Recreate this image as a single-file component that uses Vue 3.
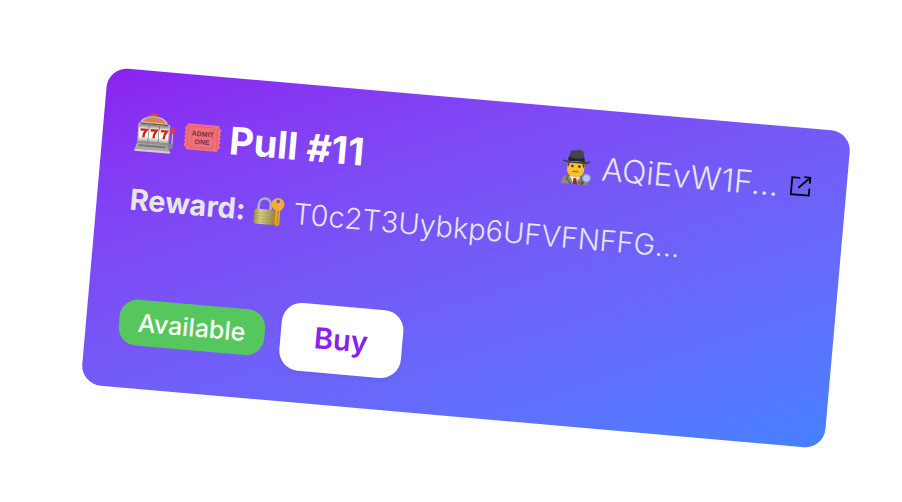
<script setup>
const pull = {
  number: 11,
  owner: 'AQiEvW1F...',
  reward: 'T0c2T3Uybkp6UFVFNFFG...',
  status: 'Available',
}
</script>

<template>
  <main class="stage">
    <article class="card">
      <header class="card-header">
        <h2 class="title">
          <svg class="emoji-large" viewBox="0 0 40 40" aria-hidden="true">
            <defs>
              <linearGradient id="steel" x1="0" y1="0" x2="0" y2="1">
                <stop offset="0" stop-color="#d8d6cf" />
                <stop offset="1" stop-color="#8b8a88" />
              </linearGradient>
              <linearGradient id="reel" x1="0" y1="0" x2="0" y2="1">
                <stop offset="0" stop-color="#8d897c" />
                <stop offset="0.3" stop-color="#fffef8" />
                <stop offset="0.7" stop-color="#fffdf5" />
                <stop offset="1" stop-color="#aaa599" />
              </linearGradient>
              <linearGradient id="dome" x1="0" y1="0" x2="0" y2="1">
                <stop offset="0" stop-color="#c98f62" />
                <stop offset="1" stop-color="#e9793a" />
              </linearGradient>
            </defs>
            <rect x="14" y="0" width="7" height="4" rx="1.5" fill="#c8502f" />
            <path d="M3 13C3 6 10 3 17.500 3S32 6 32 13z" fill="#c4bdb0" />
            <path d="M6 9c3-4 7-5 11.500-5S26 5 29 9z" fill="url(#dome)" />
            <rect x="2" y="10" width="32" height="22" rx="3" fill="url(#steel)" />
            <path d="M4 11h28" stroke="#73654e" stroke-width="1.500" />
            <rect x="3" y="12" width="30" height="17" rx="1" fill="#6b6253" />
            <rect x="3" y="12" width="9.600" height="17" fill="url(#reel)" />
            <rect x="13.200" y="12" width="9.600" height="17" fill="url(#reel)" />
            <rect x="23.400" y="12" width="9.600" height="17" fill="url(#reel)" />
            <g fill="none" stroke="#d81e1e" stroke-width="2.400">
              <path d="M4.500 17.200h6c-2 2.500-2.500 4.500-2.500 7.800" />
              <path d="M14.700 17.200h6c-2 2.500-2.500 4.500-2.500 7.800" />
              <path d="M24.900 17.200h6c-2 2.500-2.500 4.500-2.500 7.800" />
            </g>
            <path d="M2 31h31l3 7H0z" fill="#a9a7a8" />
            <path d="M4 32h27v2H4z" fill="#77777b" />
            <path d="M0 37h36v2H0z" fill="#d0cfd3" />
            <path d="M34 31h3V19" fill="none" stroke="#b3b0bd" stroke-width="1.500" />
            <circle cx="37" cy="16" r="2.700" fill="#e23a45" />
            <rect x="33" y="29" width="5" height="5" rx="1" fill="#888894" />
          </svg>
          <svg class="emoji-ticket" viewBox="0 0 38 28" aria-hidden="true">
            <path d="M3 1h32a2 2 0 0 0 2 3v3a1 1 0 0 0 0 2v2a1 1 0 0 0 0 2v2a1 1 0 0 0 0 2v2a1 1 0 0 0 0 2v3a2 2 0 0 0-2 3H3a2 2 0 0 0-2-3v-3a1 1 0 0 0 0-2v-2a1 1 0 0 0 0-2v-2a1 1 0 0 0 0-2V9a1 1 0 0 0 0-2V4a2 2 0 0 0 2-3z" fill="#f0707b" />
            <rect x="8" y="3.500" width="22" height="21" fill="none" stroke="#e06470" />
            <path d="M4.500 4v20M33.500 4v20" stroke="#c9535f" stroke-dasharray="1 1" />
            <text class="ticket-text" x="19" y="13" text-anchor="middle">ADMIT</text>
            <text class="ticket-text" x="19" y="21" text-anchor="middle">ONE</text>
          </svg>
          <span>Pull #{{ pull.number }}</span>
        </h2>

        <div class="owner">
          <svg class="emoji-person" viewBox="0 0 32 36" aria-hidden="true">
            <path d="M1 35c0-6 3-9 8-9h10c5 0 8 3 8 9z" fill="#91877a" />
            <path d="M9 27l5 8 6-8z" fill="#f5f4f5" />
            <path d="M13 29h3l1 6h-4z" fill="#9e2438" />
            <path d="M8 26l-2 4 5 5M20 26l2 4-4 5" fill="none" stroke="#5f564e" />
            <path d="M6 12h17v9c0 4-4 7-8.500 7S6 25 6 21z" fill="#fbc02d" />
            <path d="M6 12h2v4l-1 2-1-1zM21 12h2v5l-1 1-1-2z" fill="#6d4930" />
            <circle cx="11" cy="17" r="1.300" fill="#492e1b" />
            <circle cx="18" cy="17" r="1.300" fill="#492e1b" />
            <path d="M11.500 22.500h6" stroke="#a06a1c" stroke-width="1.300" />
            <path d="M6 11L8 3c1-3 4-1 6.500-2C17 0 20 0 21 3l2 8z" fill="#45454a" />
            <path d="M7 8c5 2 11 2 15 0l1 4H6z" fill="#242429" />
            <path d="M0 11c5 2 24 2 29 0-2 4-6 3-14.500 3S2 14 0 11z" fill="#3e3f44" />
            <path d="M24 31l-3 4" stroke="#514c50" stroke-width="2" />
            <circle cx="26" cy="28" r="4" fill="#b8c6fa" stroke="#8c93c4" stroke-width="1.400" />
          </svg>
          <span>{{ pull.owner }}</span>
          <a class="external" href="#" aria-label="View owner">
            <svg viewBox="0 0 28 28" fill="none" stroke="currentColor" stroke-width="1.800" aria-hidden="true">
              <path d="M13 5H5v17h18v-7M12 15L23 4M17 4h6v6" />
            </svg>
          </a>
        </div>
      </header>

      <p class="reward">
        <strong>Reward:</strong>
        <svg class="emoji-lock" viewBox="0 0 32 30" aria-hidden="true">
          <defs>
            <linearGradient id="brass" x1="0" y1="0" x2="1" y2="0">
              <stop offset="0" stop-color="#989045" />
              <stop offset="0.3" stop-color="#d8ce88" />
              <stop offset="1" stop-color="#918441" />
            </linearGradient>
          </defs>
          <path d="M5 15V9c0-9 12-9 12 0v6" fill="none" stroke="#a9b5bd" stroke-width="2.500" />
          <rect x="1" y="13" width="21" height="15" rx="2" fill="url(#brass)" />
          <path d="M2 17h19M2 20h19M2 23h19M2 26h19" stroke="#a39a58" stroke-width="0.500" />
          <path d="M22 10h5v17l-2 2-3-2z" fill="#e8a82b" />
          <path d="M22 18l-2 2 2 2-2 2 2 2" fill="none" stroke="#bf841e" stroke-width="1.500" />
          <circle cx="24" cy="7" r="6.500" fill="#efb032" />
          <circle cx="24" cy="4" r="1.800" fill="#7651df" />
          <path d="M25 13v14" stroke="#b88222" />
        </svg>
        <span>{{ pull.reward }}</span>
      </p>

      <footer class="actions">
        <span class="badge">{{ pull.status }}</span>
        <button class="buy" type="button">Buy</button>
      </footer>
    </article>
  </main>
</template>

<style>
body {
  margin: 0;
  background: #ffffff;
}
</style>

<style scoped>
.stage {
  padding: 99px 63px 85px 93px;
  overflow: hidden;
  font-family: Inter, 'Liberation Sans', sans-serif;
}

.card {
  padding: 32px 32px 32px 33px;
  border-radius: 20px;
  background: linear-gradient(to bottom right in oklab, #8b20f0, #4580ff);
  color: #e5e7eb;
  transform: rotate(5deg);
}

.card-header {
  display: flex;
  align-items: flex-start;
  justify-content: space-between;
}

.title {
  display: flex;
  align-items: center;
  gap: 8px;
  margin: 0;
  color: #ffffff;
  font-size: 38px;
  font-weight: 700;
  line-height: 60px;
}

.emoji-large {
  width: 40px;
  height: 40px;
}

.emoji-ticket {
  width: 38px;
  height: 28px;
}

.ticket-text {
  fill: #743343;
  font-family: 'Liberation Sans', sans-serif;
  font-size: 7px;
  font-weight: 700;
}

.owner {
  display: flex;
  align-items: center;
  gap: 8px;
  font-size: 32px;
  font-weight: 350;
  line-height: 54px;
}

.emoji-person {
  width: 32px;
  height: 36px;
}

.external {
  display: flex;
  color: #000000;
}

.external svg {
  width: 28px;
  height: 28px;
}

.reward {
  display: flex;
  align-items: center;
  gap: 8px;
  margin: 18px 0 0;
  font-size: 29px;
  font-weight: 350;
  line-height: 40px;
}

.reward strong {
  font-weight: 700;
}

.emoji-lock {
  width: 32px;
  height: 30px;
}

.actions {
  display: flex;
  align-items: center;
  gap: 16px;
  margin-top: 68px;
}

.badge {
  padding: 8px 19px;
  border-radius: 18px;
  background: #56c75c;
  color: #ffffff;
  font-size: 25px;
  font-weight: 500;
  line-height: 30px;
}

.buy {
  padding: 16px 34px;
  border: 0;
  border-radius: 20px;
  background: #ffffff;
  box-shadow: 0 2px 4px rgba(0, 0, 0, 0.05);
  color: #8b20ec;
  font-family: inherit;
  font-size: 29px;
  font-weight: 600;
  line-height: 36px;
  cursor: pointer;
}
</style>
